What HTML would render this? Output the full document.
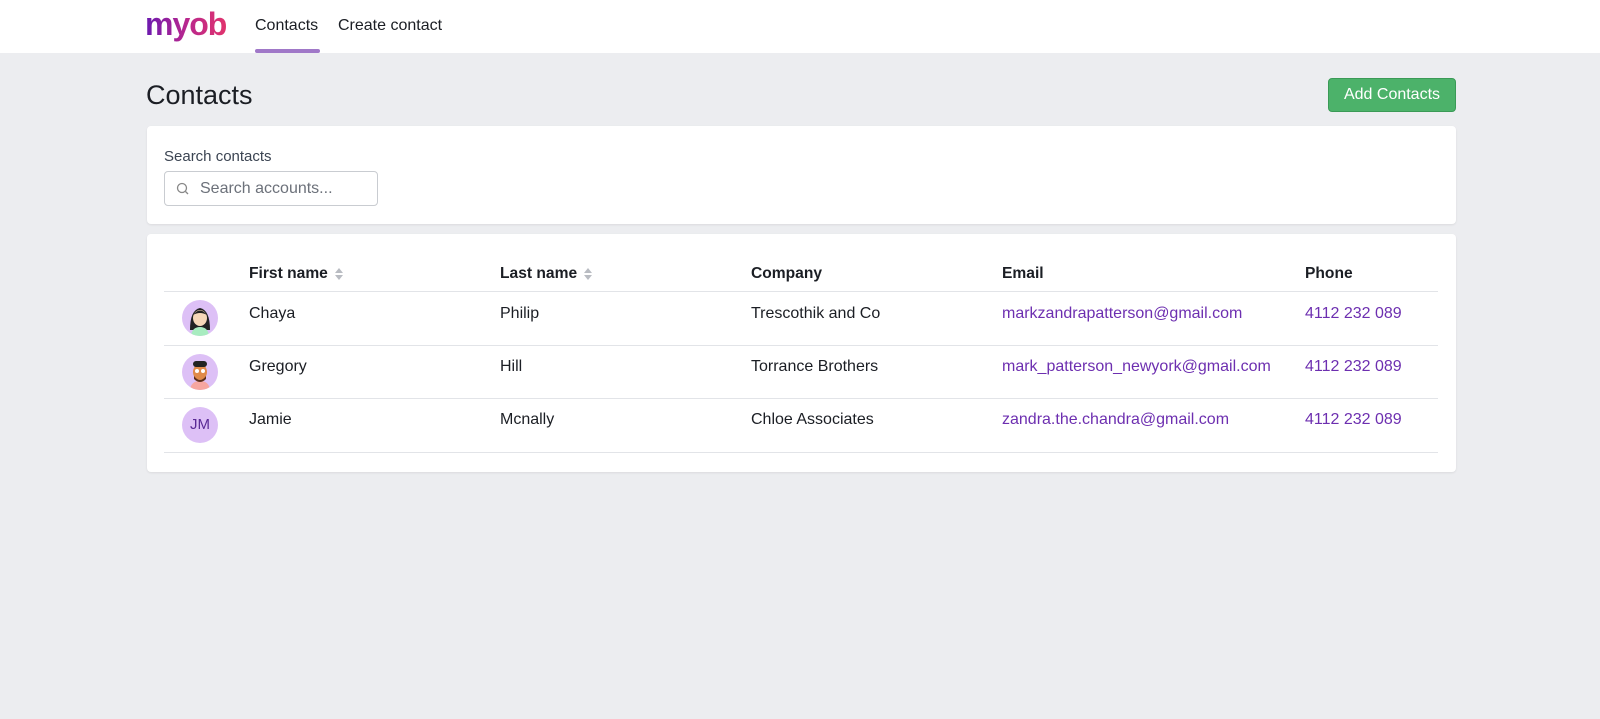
<!DOCTYPE html>
<html><head><meta charset="utf-8"><style>
*{box-sizing:border-box;margin:0;padding:0}
body{width:1600px;height:719px;background:#ecedf0;font-family:"Liberation Sans",sans-serif;color:#1b1e24;overflow:hidden;position:relative}
.nav{position:absolute;left:0;top:0;width:1600px;height:53px;background:#fff}
.logo{position:absolute;left:145px;top:6px;font-size:32px;font-weight:bold;letter-spacing:-1px;background:linear-gradient(90deg,#6a19b0,#b7278f,#e0336d);-webkit-background-clip:text;color:transparent}
.nl{position:absolute;top:17px;font-size:16px;color:#1b1e24}
.ul{position:absolute;left:255px;top:49px;width:65px;height:4px;background:#a078c8;border-radius:2px}
h1{position:absolute;left:146px;top:80px;font-size:27px;font-weight:normal;color:#1b1e24}
.btn{position:absolute;left:1328px;top:78px;width:128px;height:34px;background:#4cb26a;border:1px solid #3a9a56;border-radius:4px;color:#fff;font-size:16px;text-align:center;line-height:32px}
.card{position:absolute;left:147px;background:#fff;border-radius:4px;width:1309px;box-shadow:0 1px 2px rgba(0,0,0,.08)}
.lbl{position:absolute;left:17px;top:22px;font-size:15px;color:#3b4452}
.inp{position:absolute;left:17px;top:45px;width:214px;height:35px;border:1px solid #c9ccd1;border-radius:4px}
.inp span{position:absolute;left:35px;top:8px;font-size:16px;color:#6c717a}
.th{position:absolute;top:31px;font-size:15.6px;font-weight:bold}
.line{position:absolute;left:17px;width:1274px;height:1px;background:#e2e4e8}
.c{position:absolute;font-size:16px}
.p{color:#6d2fb0}
.av{position:absolute;left:35px;width:36px;height:36px;border-radius:50%;background:#ddc0f6;overflow:hidden;text-align:center;line-height:36px;color:#5a2a95;font-size:15px}
.sort{display:inline-block;margin-left:6px;vertical-align:middle}
</style></head><body>
<div class="nav">
<div class="logo">myob</div>
<div class="nl" style="left:255px">Contacts</div>
<div class="nl" style="left:338px">Create contact</div>
<div class="ul"></div>
</div>
<h1>Contacts</h1>
<div class="btn">Add Contacts</div>
<div class="card" style="top:126px;height:98px">
<div class="lbl">Search contacts</div>
<div class="inp"><svg style="position:absolute;left:11px;top:10px" width="14" height="14" viewBox="0 0 14 14"><circle cx="6" cy="6" r="4.5" fill="none" stroke="#888" stroke-width="1.3"/><path d="M9.5 9.5L12 12" stroke="#888" stroke-width="1.3"/></svg><span>Search accounts...</span></div>
</div>
<div class="card" style="top:234px;height:238px">
<div class="th" style="left:102px">First name<svg class="sort" width="10" height="14" viewBox="0 0 10 14"><path d="M5 1L9 6H1Z M5 13L1 8H9Z" fill="#b9bcc2"/></svg></div>
<div class="th" style="left:353px">Last name<svg class="sort" width="10" height="14" viewBox="0 0 10 14"><path d="M5 1L9 6H1Z M5 13L1 8H9Z" fill="#b9bcc2"/></svg></div>
<div class="th" style="left:604px">Company</div>
<div class="th" style="left:855px">Email</div>
<div class="th" style="left:1158px">Phone</div>
<div class="line" style="top:57px"></div>
<div class="line" style="top:111px"></div>
<div class="line" style="top:164px"></div>
<div class="line" style="top:218px"></div>

<div class="av" style="top:66px"><svg width="36" height="36" viewBox="0 0 36 36"><path d="M8 30 Q8 10 18 8 Q28 10 28 30Z" fill="#222"/><ellipse cx="18" cy="18" rx="7" ry="8" fill="#f6d7b8"/><path d="M11 15 Q18 6 25 15 Q18 11 11 15Z" fill="#222"/><path d="M9 36 Q10 27 18 27 Q26 27 27 36Z" fill="#a8ecc0"/></svg></div>
<div class="c" style="left:102px;top:71px">Chaya</div><div class="c" style="left:353px;top:71px">Philip</div><div class="c" style="left:604px;top:71px">Trescothik and Co</div><div class="c p" style="left:855px;top:71px">markzandrapatterson@gmail.com</div><div class="c p" style="left:1158px;top:71px">4112 232 089</div>

<div class="av" style="top:120px"><svg width="36" height="36" viewBox="0 0 36 36"><path d="M8 36 Q9 27 18 27 Q27 27 28 36Z" fill="#f7a6a0"/><ellipse cx="18" cy="18" rx="7" ry="8" fill="#e08a4a"/><path d="M12 22 Q18 30 24 22 L24 25 Q18 31 12 25Z" fill="#5a2e1a"/><rect x="11" y="7" width="14" height="6" rx="3" fill="#222"/><circle cx="15" cy="17" r="2" fill="#fff"/><circle cx="21" cy="17" r="2" fill="#fff"/></svg></div>
<div class="c" style="left:102px;top:124px">Gregory</div><div class="c" style="left:353px;top:124px">Hill</div><div class="c" style="left:604px;top:124px">Torrance Brothers</div><div class="c p" style="left:855px;top:124px">mark_patterson_newyork@gmail.com</div><div class="c p" style="left:1158px;top:124px">4112 232 089</div>

<div class="av" style="top:173px">JM</div>
<div class="c" style="left:102px;top:177px">Jamie</div><div class="c" style="left:353px;top:177px">Mcnally</div><div class="c" style="left:604px;top:177px">Chloe Associates</div><div class="c p" style="left:855px;top:177px">zandra.the.chandra@gmail.com</div><div class="c p" style="left:1158px;top:177px">4112 232 089</div>
</div>
</body></html>
